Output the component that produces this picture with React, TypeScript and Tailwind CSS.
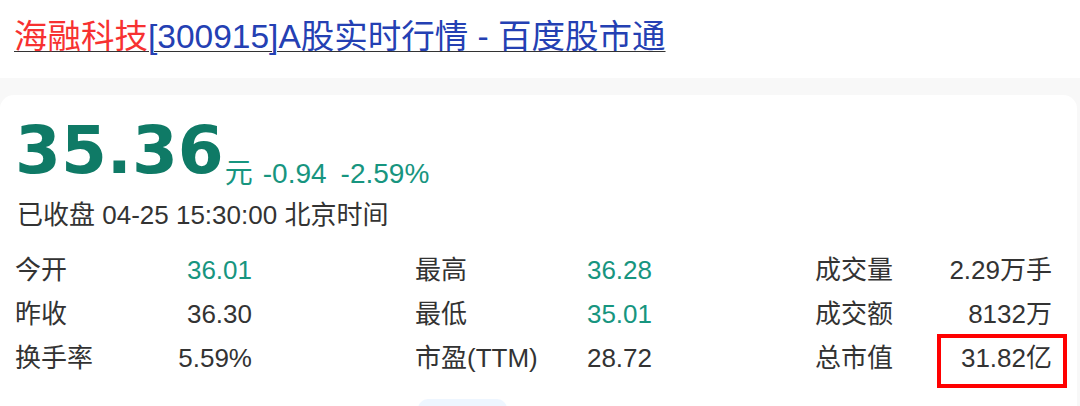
import React from "react";

const FONT = { fontFamily: '"Liberation Sans", "Noto Sans CJK SC", sans-serif' };

type Item = { label: string; value: string; green?: boolean; boxed?: boolean };

const cols: Item[][] = [
  [
    { label: "今开", value: "36.01", green: true },
    { label: "昨收", value: "36.30" },
    { label: "换手率", value: "5.59%" },
  ],
  [
    { label: "最高", value: "36.28", green: true },
    { label: "最低", value: "35.01", green: true },
    { label: "市盈(TTM)", value: "28.72" },
  ],
  [
    { label: "成交量", value: "2.29万手" },
    { label: "成交额", value: "8132万" },
    { label: "总市值", value: "31.82亿", boxed: true },
  ],
];

export default function App() {
  return (
    <div className="w-[1080px] h-[406px] overflow-hidden bg-white text-[#333]" style={FONT}>
      <div className="pt-[17px] pl-[14px] h-[78px]">
        <a className="text-[33.5px] leading-[40px] underline decoration-1 underline-offset-[3px] whitespace-nowrap">
          <span className="text-[#f73131]">海融科技</span>
          <span className="text-[#2440b3]">[300915]A股实时行情 - 百度股市通</span>
        </a>
      </div>
      <div className="bg-[#f8f8f8] pt-[17px]">
        <div className="bg-white rounded-t-[14px] mr-[3px] pt-[23px] pl-[17px] h-[311px]">
          <div className="flex items-baseline h-[66px] -ml-[2px]">
            <span
              className="text-[66px] leading-[66px] font-bold text-[#0f7a66]"
              style={{ fontFamily: '"DejaVu Sans", sans-serif' }}
            >
              35.36
            </span>
            <span className="ml-[1px] translate-y-[10px] text-[28px] leading-[28px] text-[#17957f] whitespace-nowrap">
              元<span className="ml-[10px]">-0.94</span>
              <span className="ml-[14px]">-2.59%</span>
            </span>
          </div>
          <div className="mt-[15px] text-[26px] leading-[32px] whitespace-nowrap">
            已收盘 04-25 15:30:00 北京时间
          </div>
          <div className="mt-[17px] grid grid-cols-[400px_400px_260px] -ml-[2px]">
            {cols.map((col, ci) => (
              <div key={ci} className="flex flex-col">
                {col.map((it) => (
                  <div
                    key={it.label}
                    className="relative flex justify-between items-center w-[237px] h-[44px] text-[26px] leading-[32px]"
                  >
                    <span>{it.label}</span>
                    <span className={it.green ? "text-[#17957f]" : "text-[#333]"}>{it.value}</span>
                    {it.boxed && (
                      <span className="absolute left-[122px] top-[-2px] w-[130px] h-[54px] border-[4px] border-[#ff0000]" />
                    )}
                  </div>
                ))}
              </div>
            ))}
          </div>
          <div className="mt-[19px] ml-[401px] w-[89px] h-[20px] rounded-[10px] bg-[#eef6ff]" />
        </div>
      </div>
    </div>
  );
}
